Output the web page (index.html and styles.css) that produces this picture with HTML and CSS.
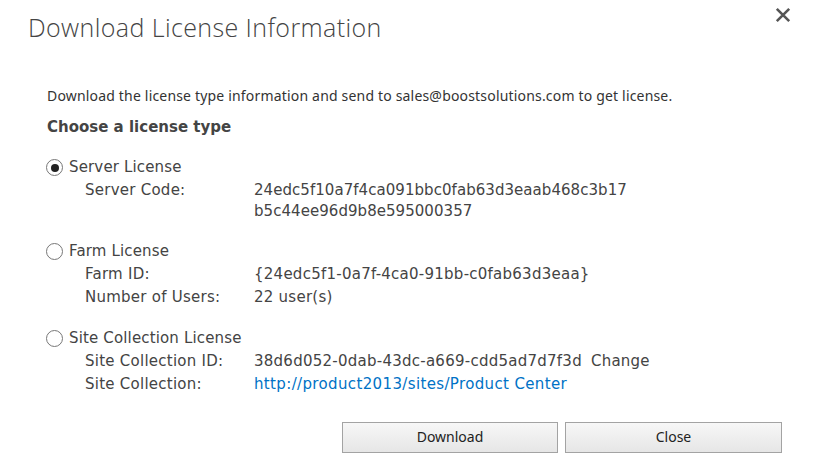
FILE: index.html
```html
<!DOCTYPE html>
<html>
<head>
<meta charset="utf-8">
<link rel="stylesheet" href="styles.css">
</head>
<body>
<div class="dialog">
  <div class="header">
    <h1 class="title">Download License Information</h1>
    <span class="close" aria-label="Close">
      <svg width="16" height="16" viewBox="0 0 16 16"><path d="M1.8 1.8 L14.2 14.2 M14.2 1.8 L1.8 14.2" stroke="#555" stroke-width="2.6"/></svg>
    </span>
  </div>
  <div class="content">
    <p class="desc">Download the license type information and send to sales@boostsolutions.com to get license.</p>
    <h2 class="subtitle">Choose a license type</h2>

    <div class="option first">
      <label class="opt-label"><span class="radio checked"></span>Server License</label>
      <div class="grid">
        <span class="lbl">Server Code:</span>
        <span class="val wrap">24edc5f10a7f4ca091bbc0fab63d3eaab468c3b17<br>b5c44ee96d9b8e595000357</span>
      </div>
    </div>

    <div class="option">
      <label class="opt-label"><span class="radio"></span>Farm License</label>
      <div class="grid">
        <span class="lbl">Farm ID:</span>
        <span class="val">{24edc5f1-0a7f-4ca0-91bb-c0fab63d3eaa}</span>
        <span class="lbl">Number of Users:</span>
        <span class="val">22 user(s)</span>
      </div>
    </div>

    <div class="option">
      <label class="opt-label"><span class="radio"></span>Site Collection License</label>
      <div class="grid">
        <span class="lbl">Site Collection ID:</span>
        <span class="val">38d6d052-0dab-43dc-a669-cdd5ad7d7f3d<span class="change">Change</span></span>
        <span class="lbl">Site Collection:</span>
        <span class="val"><a class="link" href="#">http://product2013/sites/Product Center</a></span>
      </div>
    </div>

    <div class="buttons">
      <button class="btn btn-download">Download</button>
      <button class="btn btn-close">Close</button>
    </div>
  </div>
</div>
</body>
</html>
```

FILE: styles.css
```css
html, body {
  margin: 0;
  padding: 0;
  background: #fff;
}
.dialog {
  width: 813px;
  height: 465px;
  box-sizing: border-box;
  color: #444;
  font-family: "DejaVu Sans", Verdana, sans-serif;
}
.header {
  display: flex;
  justify-content: space-between;
  align-items: flex-start;
  padding: 11px 23px 0 28px;
}
.title {
  margin: 0;
  font-family: "Open Sans", sans-serif;
  font-weight: 300;
  font-size: 25px;
  letter-spacing: 0.4px;
  line-height: 32px;
  color: #444;
}
.close {
  display: block;
  margin-top: -4px;
  margin-right: -1px;
  width: 16px;
  height: 16px;
}
.close svg {
  display: block;
}
.content {
  padding: 44px 0 0 47px;
}
.desc {
  margin: 0;
  font-family: "Noto Sans", sans-serif;
  font-size: 14px;
  letter-spacing: 0.18px;
  line-height: 18px;
  color: #333;
}
.subtitle {
  margin: 12px 0 0 0;
  font-family: "DejaVu Sans", sans-serif;
  font-weight: bold;
  font-size: 15px;
  line-height: 20px;
  color: #444;
}
.option {
  margin-top: 18px;
}
.option.first {
  margin-top: 19px;
}
.opt-label {
  display: flex;
  align-items: center;
  font-size: 15px;
  line-height: 23px;
  letter-spacing: 0.15px;
  color: #444;
}
.radio {
  width: 17px;
  height: 17px;
  border: 1px solid #777;
  border-radius: 50%;
  box-sizing: border-box;
  margin: 0 6px 0 -1px;
  position: relative;
  background: #fff;
  flex: none;
}
.radio.checked::after {
  content: "";
  position: absolute;
  left: 3.5px;
  top: 3.5px;
  width: 8px;
  height: 8px;
  border-radius: 50%;
  background: #222;
}
.grid {
  display: grid;
  grid-template-columns: 169px auto;
  align-items: baseline;
  padding-left: 38px;
  font-size: 15px;
  line-height: 23px;
  letter-spacing: 0.25px;
}
.val.wrap {
  line-height: 21px;
  letter-spacing: 0.05px;
}
.change {
  margin-left: 9px;
}
.link {
  color: #0072c6;
  text-decoration: none;
  letter-spacing: 0.36px;
}
.buttons {
  display: flex;
  gap: 7px;
  margin: 26px 0 0 295px;
}
.btn {
  box-sizing: border-box;
  width: 216px;
  height: 31px;
  border: 1px solid #a3a3a3;
  background: linear-gradient(#f7f7f7, #e6e6e6);
  font-family: "Noto Sans", sans-serif;
  font-size: 14px;
  color: #222;
  padding: 0 0 3px 0;
}
.btn-close {
  width: 217px;
}
```
